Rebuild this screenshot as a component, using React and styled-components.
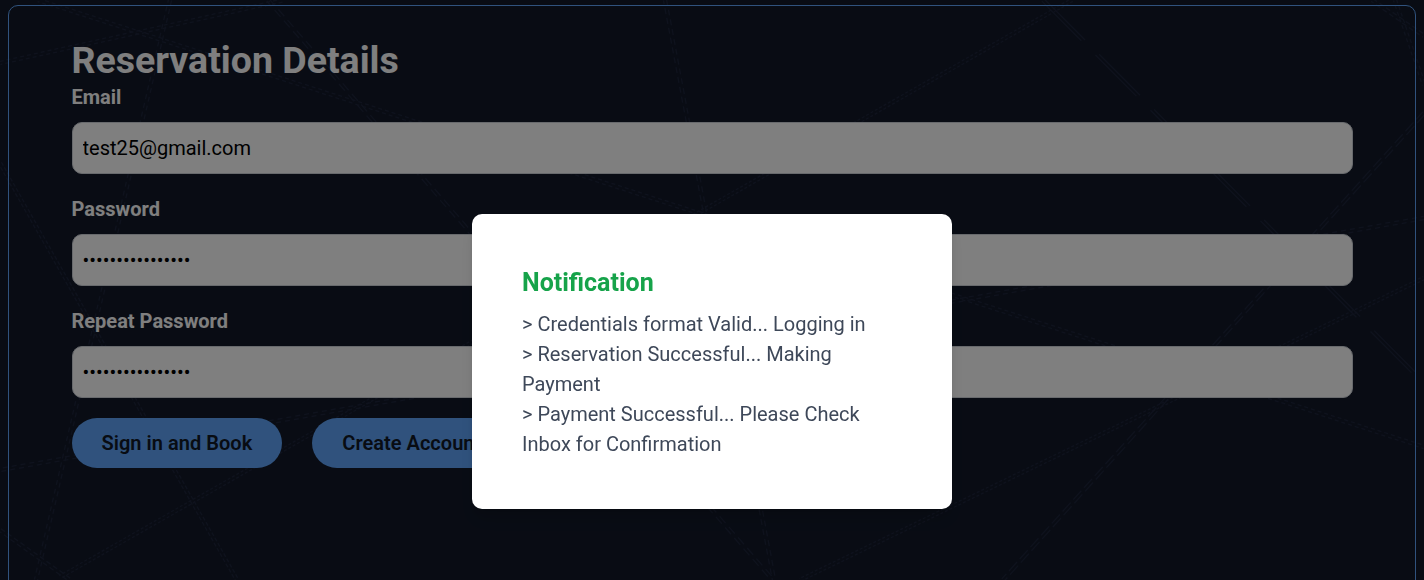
import React from "react";
import styled, { createGlobalStyle } from "styled-components";

const GlobalStyle = createGlobalStyle`
  *, *::before, *::after { box-sizing: border-box; }
  body {
    margin: 0;
    background: #121929;
    color: #fff;
    font-family: Roboto, "Liberation Sans", sans-serif;
    font-size: 20px;
    line-height: 30px;
    overflow: hidden;
  }
`;

const Page = styled.main`
  position: relative;
  height: 100vh;
  padding: 5px 8px 0;
  overflow: hidden;
`;

const Backdrop = styled.svg`
  position: absolute;
  inset: 0;
  width: 1424px;
  height: 580px;
  fill: none;
  stroke: #1e253b;
  stroke-width: 1.3;
`;

const Panel = styled.section`
  position: relative;
  height: 700px;
  padding: 32px 62.5px;
  border: 1px solid #60a5fa;
  border-radius: 10px;
`;

const Title = styled.h1`
  margin: 0;
  font-size: 37.5px;
  font-weight: 700;
  line-height: 45px;
`;

const Form = styled.form`
  display: flex;
  flex-direction: column;
  gap: 20px;
  margin-top: -1px;
`;

const Field = styled.label`
  display: flex;
  flex-direction: column;
  gap: 10px;
  font-weight: 700;
`;

const Input = styled.input`
  width: 100%;
  height: 52px;
  padding: 10px;
  border: 1px solid #d1d5db;
  border-radius: 10px;
  background: #fff;
  color: #000;
  font: 400 20px/30px Roboto, "Liberation Sans", sans-serif;
`;

const Actions = styled.div`
  display: flex;
  gap: 30px;
`;

const Button = styled.button`
  height: 50px;
  padding: 0 30px;
  border: 0;
  border-radius: 25px;
  background: #60a5fa;
  color: #111827;
  font: 600 20px/30px Roboto, "Liberation Sans", sans-serif;
  letter-spacing: 0.03px;
`;

const Overlay = styled.div`
  position: fixed;
  inset: 0;
  display: flex;
  align-items: flex-start;
  justify-content: center;
  padding-top: 214px;
  background: rgba(0, 0, 0, 0.5);
`;

const Dialog = styled.div`
  width: 480px;
  padding: 51px 50px 50px;
  border-radius: 10px;
  background: #fff;
  box-shadow: 0 12px 18px -3px rgba(0, 0, 0, 0.1), 0 5px 8px -2px rgba(0, 0, 0, 0.1);
`;

const DialogTitle = styled.h2`
  margin: 0 0 9px;
  color: #16a34a;
  font-size: 25px;
  font-weight: 700;
  line-height: 35px;
`;

const Message = styled.p`
  margin: 0;
  color: #3e4859;
`;

const strands = [
  [38, 0, 1424, 447, "4 3"],
  [0, 63, 285, 0, "4 3"],
  [170, 0, 36, 580, "5 4"],
  [268, 0, 773, 580, "9 5"],
  [0, 163, 237, 580, "4 2"],
  [665, 0, 774, 580, "6 4"],
  [1072, 0, 60, 577, "3 2"],
  [1043, 0, 1424, 383, "58 20"],
  [1372, 0, 1424, 36, "5 3"],
  [1395, 0, 1424, 85, "4 3"],
  [1424, 113, 1003, 580, "12 4"],
  [1424, 218, 0, 470, "5 4"],
  [1424, 278, 800, 580, "3 2"],
  [0, 530, 70, 580, "5 3"],
];

function Network() {
  return (
    <Backdrop viewBox="0 0 1424 580" aria-hidden="true">
      {strands.map(([x1, y1, x2, y2, dash], i) => {
        const length = Math.hypot(x2 - x1, y2 - y1);
        const dx = ((y2 - y1) / length) * 1.6;
        const dy = ((x2 - x1) / length) * 1.6;
        return (
          <g key={i} strokeDasharray={dash}>
            <line x1={x1 + dx} y1={y1 - dy} x2={x2 + dx} y2={y2 - dy} />
            <line x1={x1 - dx} y1={y1 + dy} x2={x2 - dx} y2={y2 + dy} strokeDashoffset="2" />
          </g>
        );
      })}
    </Backdrop>
  );
}

const fields = [
  { label: "Email", type: "email" },
  { label: "Password", type: "password" },
  { label: "Repeat Password", type: "password" },
];

const messages = [
  "> Credentials format Valid... Logging in",
  "> Reservation Successful... Making Payment",
  "> Payment Successful... Please Check Inbox for Confirmation",
];

export default function App() {
  return (
    <>
      <GlobalStyle />
      <Page>
        <Network />
        <Panel>
          <Title>Reservation Details</Title>
          <Form>
            {fields.map(({ label, type }) => (
              <Field key={label}>
                {label}
                <Input type={type} defaultValue="test25@gmail.com" />
              </Field>
            ))}
            <Actions>
              <Button type="button">Sign in and Book</Button>
              <Button type="button">Create Account</Button>
            </Actions>
          </Form>
        </Panel>
      </Page>
      <Overlay>
        <Dialog role="dialog">
          <DialogTitle>Notification</DialogTitle>
          {messages.map((text) => (
            <Message key={text}>{text}</Message>
          ))}
        </Dialog>
      </Overlay>
    </>
  );
}
